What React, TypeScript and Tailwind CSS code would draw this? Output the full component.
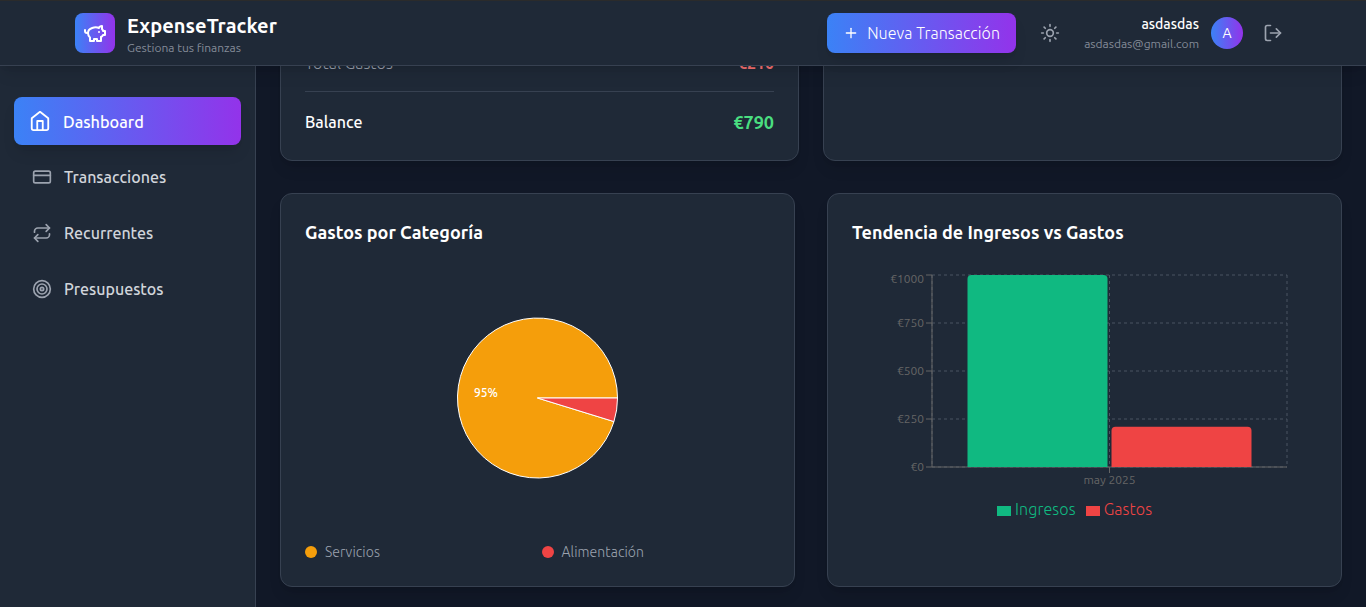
import type { ReactNode } from "react";
import { CreditCard, LogOut, Plus, Repeat, Sun, Target } from "lucide-react";

function PiggyIcon() {
  return (
    <svg width="24" height="24" viewBox="0 0 24 24" fill="none" stroke="currentColor" strokeWidth="2" strokeLinecap="round" strokeLinejoin="round">
      <path d="M19 5c-1.5 0-2.8 1.4-3 2-3.5-1.5-11-.3-11 5 0 1.8 0 3 2 4.5V20h4v-2h3v2h4v-4c1-.5 1.7-1 2-2h2v-4h-2c0-1-.5-1.5-1-2V5z" />
      <path d="M2 9v1c0 1.1.9 2 2 2h1" />
      <path d="M16 11h.01" />
    </svg>
  );
}

function HomeIcon() {
  return (
    <svg width="22" height="22" viewBox="0 0 24 24" fill="none" stroke="currentColor" strokeWidth="2" strokeLinecap="round" strokeLinejoin="round">
      <path d="m3 9 9-7 9 7v11a2 2 0 0 1-2 2H5a2 2 0 0 1-2-2z" />
      <path d="M9 22V12h6v10" />
    </svg>
  );
}

function Header() {
  return (
    <header className="relative z-10 h-[66px] shrink-0 border-t border-b border-t-[#2b2b2b] border-b-[#374151] bg-[#1f2937] shadow-lg">
      <div className="mx-auto flex h-full max-w-7xl items-center justify-between px-8">
        <div className="flex items-center gap-3">
          <div className="flex size-10 items-center justify-center rounded-lg bg-linear-to-r/srgb from-[#3b82f6] to-[#9333ea] text-white">
            <PiggyIcon />
          </div>
          <div className="pt-0.5">
            <h1 className="text-xl leading-7 font-semibold tracking-[0.06px] text-white">ExpenseTracker</h1>
            <p className="text-xs leading-4 text-[#848b97]">Gestiona tus finanzas</p>
          </div>
        </div>
        <div className="flex items-center gap-4">
          <button className="flex h-10 w-[189px] items-center gap-2 rounded-lg bg-linear-to-r/srgb from-[#3b82f6] to-[#9333ea] px-4 text-base font-light tracking-[0.07px] whitespace-nowrap text-white shadow-lg">
            <Plus size={16} className="shrink-0" />
            <span>Nueva Transacción</span>
          </button>
          <button className="p-2 text-[#9ca3af]">
            <Sun size={20} />
          </button>
          <div className="flex items-center gap-3">
            <div className="text-right">
              <p className="text-sm leading-5 font-medium text-white">asdasdas</p>
              <p className="pt-0.5 text-xs leading-4 text-[#848b97]">asdasdas@gmail.com</p>
            </div>
            <div className="flex size-8 items-center justify-center rounded-full bg-linear-to-r/srgb from-[#3b82f6] to-[#9333ea] text-sm text-white">A</div>
            <button className="p-2 text-[#9ca3af]">
              <LogOut size={20} />
            </button>
          </div>
        </div>
      </div>
    </header>
  );
}

function NavItem({ icon, label }: { icon: ReactNode; label: string }) {
  return (
    <a className="flex h-12 items-center gap-3 px-4 text-[#d1d5db]">
      <span className="text-[#9ca3af]">{icon}</span>
      <span className="text-base font-medium">{label}</span>
    </a>
  );
}

function Sidebar() {
  return (
    <aside className="w-64 shrink-0 border-r border-[#374151] bg-[#1f2937] px-4 pt-[31px]">
      <nav className="flex flex-col gap-2">
        <a className="-mx-0.5 flex h-12 items-center gap-3 rounded-lg bg-linear-to-r/srgb from-[#3b82f6] to-[#9333ea] pl-[15px] text-white shadow-lg">
          <HomeIcon />
          <span className="pt-0.5 text-[16.3px] leading-6 font-medium">Dashboard</span>
        </a>
        <NavItem icon={<CreditCard size={20} />} label="Transacciones" />
        <NavItem icon={<Repeat size={20} />} label="Recurrentes" />
        <NavItem icon={<Target size={20} />} label="Presupuestos" />
      </nav>
    </aside>
  );
}

function Card({ children }: { children?: ReactNode }) {
  return <section className="rounded-xl border border-[#374151] bg-[#1f2937] p-6 shadow-lg">{children}</section>;
}

function CardTitle({ children }: { children: ReactNode }) {
  return <h3 className="mb-6 text-lg leading-7 font-semibold text-white">{children}</h3>;
}

function LegendItem({ dot, label }: { dot: string; label: string }) {
  return (
    <div className="flex items-center gap-2">
      <span className={`size-3 rounded-full ${dot}`} />
      <span className="text-sm leading-5 font-light tracking-[0.08px] text-[#9ca3af]">{label}</span>
    </div>
  );
}

function PieChart() {
  return (
    <svg className="h-64 w-full" viewBox="0 0 465 256">
      <g stroke="#fff" strokeWidth="1">
        <path d="M232.5 128L312.5 128A80 80 0 1 0 308.95 151.58Z" fill="#f59e0b" />
        <path d="M232.5 128L308.95 151.58A80 80 0 0 0 312.5 128Z" fill="#ef4444" />
      </g>
      <text x="181" y="127" fill="#fff" fontSize="12" fontWeight="500" textAnchor="middle">95%</text>
    </svg>
  );
}

const ticks = [
  { label: "€1000", y: 5, textY: 13 },
  { label: "€750", y: 53, textY: 57 },
  { label: "€500", y: 101, textY: 105 },
  { label: "€250", y: 149, textY: 153 },
  { label: "€0", y: 197, textY: 201 },
];

function BarChart() {
  return (
    <svg className="h-64 w-full" viewBox="0 0 465 256">
      <g stroke="#4b5563" strokeDasharray="3 3">
        {ticks.map((t) => (
          <line key={t.label} x1="80" y1={t.y} x2="435" y2={t.y} />
        ))}
        <line x1="80" y1="5" x2="80" y2="197" />
        <line x1="257.5" y1="5" x2="257.5" y2="197" />
        <line x1="435" y1="5" x2="435" y2="197" />
      </g>
      <g stroke="#666">
        <line x1="80" y1="5" x2="80" y2="197" />
        <line x1="80" y1="197" x2="435" y2="197" />
        <line x1="257.5" y1="197" x2="257.5" y2="203" />
        {ticks.map((t) => (
          <line key={t.label} x1="74" y1={t.y} x2="80" y2={t.y} />
        ))}
      </g>
      <path d="M115.5 197V9a4 4 0 0 1 4-4h132a4 4 0 0 1 4 4V197Z" fill="#10b981" />
      <path d="M259.5 197V160.68a4 4 0 0 1 4-4h132a4 4 0 0 1 4 4V197Z" fill="#ef4444" />
      <g fill="#666" fontSize="12">
        {ticks.map((t) => (
          <text key={t.label} x="72" y={t.textY} textAnchor="end">{t.label}</text>
        ))}
        <text x="257.5" y="214" textAnchor="middle">may 2025</text>
      </g>
      <rect x="145" y="236" width="14" height="10" fill="#10b981" />
      <rect x="234" y="236" width="14" height="10" fill="#ef4444" />
      <g fontSize="16" fontWeight="300">
        <text x="163" y="245" fill="#10b981" letterSpacing="0.12">Ingresos</text>
        <text x="251.7" y="245" fill="#ef4444" letterSpacing="0.12">Gastos</text>
      </g>
    </svg>
  );
}

export default function App() {
  return (
    <div className="flex h-[607px] flex-col overflow-hidden bg-[#111827] font-['Ubuntu','Open_Sans','Noto_Sans',sans-serif]">
      <Header />
      <div className="flex min-h-0 flex-1">
        <Sidebar />
        <main className="min-w-0 flex-1 px-6">
          <div className="-mt-10 mb-8 grid grid-cols-2 gap-6">
            <Card>
              <div className="flex h-6 items-center justify-between">
                <span className="text-base font-light tracking-[0.07px] text-[#9ca3af]">Total Gastos</span>
                <span className="text-base font-semibold text-[#f87171]">€210</span>
              </div>
              <div className="mt-4 flex items-center justify-between border-t border-[#374151] pt-4">
                <span className="text-base font-medium text-white">Balance</span>
                <span className="text-lg leading-7 font-semibold text-[#4ade80]">€790</span>
              </div>
            </Card>
            <Card />
          </div>
          <div className="grid grid-cols-2 gap-8">
            <Card>
              <CardTitle>Gastos por Categoría</CardTitle>
              <PieChart />
              <div className="mt-4 grid grid-cols-2 gap-2">
                <LegendItem dot="bg-[#f59e0b]" label="Servicios" />
                <LegendItem dot="bg-[#ef4444]" label="Alimentación" />
              </div>
            </Card>
            <Card>
              <CardTitle>Tendencia de Ingresos vs Gastos</CardTitle>
              <BarChart />
            </Card>
          </div>
        </main>
      </div>
    </div>
  );
}
